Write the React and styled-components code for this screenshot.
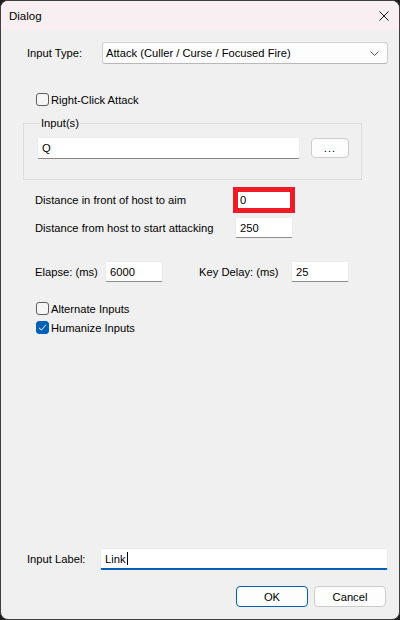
import React from "react";
import styled, { createGlobalStyle } from "styled-components";

const GlobalStyle = createGlobalStyle`
  html, body {
    margin: 0;
    padding: 0;
    background: #1f1f1f;
  }
  * {
    box-sizing: border-box;
  }
`;

const Window = styled.div`
  width: 400px;
  height: 620px;
  border: 1px solid #3f3f3f;
  border-radius: 8px;
  overflow: hidden;
  background: #f0f0f0;
  display: flex;
  flex-direction: column;
  font-family: "Liberation Sans", Arial, sans-serif;
  font-size: 11.2px;
  color: #000;
`;

const TitleBar = styled.div`
  height: 30px;
  flex: none;
  display: flex;
  align-items: center;
  justify-content: space-between;
  background: #f8eff2;
  padding: 0 10px 0 8px;
`;

const Title = styled.span`
  font-size: 11.5px;
`;

const CloseButton = styled.span`
  display: flex;
  width: 10px;
  height: 10px;
`;

const Body = styled.div`
  flex: 1;
  display: flex;
  flex-direction: column;
  padding: 0 11px 12px 26px;
`;

const Row = styled.div`
  display: flex;
  align-items: center;
  margin-top: ${(p) => p.$top || 0}px;
  padding-left: ${(p) => p.$indent || 0}px;
`;

const Label = styled.span`
  width: ${(p) => p.$width}px;
  margin-left: ${(p) => p.$gap || 0}px;
  flex: none;
  white-space: nowrap;
`;

const Combo = styled.div`
  flex: 1;
  height: 22px;
  display: flex;
  align-items: center;
  justify-content: space-between;
  background: #fdfdfd;
  border: 1px solid #cfcfcf;
  border-bottom-color: #b8b8b8;
  border-radius: 3px;
  padding: 0 8px 0 3px;
`;

const CheckRow = styled.label`
  display: flex;
  align-items: center;
  height: 19px;
  margin-top: ${(p) => p.$top || 0}px;
  padding-left: 9px;
`;

const CheckBox = styled.span`
  width: 13px;
  height: 13px;
  flex: none;
  display: flex;
  align-items: center;
  justify-content: center;
  border-radius: 3px;
  border: 1px solid ${(p) => (p.$checked ? "#005fb8" : "#5d5d5d")};
  background: ${(p) => (p.$checked ? "#005fb8" : "#f5f5f5")};
  margin-right: 2px;
`;

const Group = styled.fieldset`
  width: 339px;
  margin: ${(p) => p.$top}px 0 0 -4px;
  padding: 7px 12px 20px 13px;
  border: 1px solid #dcdcdc;
  border-radius: 0;
  min-inline-size: 0;
`;

const Legend = styled.legend`
  padding: 0 1px;
  margin-left: 3px;
  line-height: 13px;
`;

const Edit = styled.div`
  width: ${(p) => (p.$width ? `${p.$width}px` : "auto")};
  flex: ${(p) => (p.$width ? "none" : 1)};
  height: ${(p) => p.$height || 21}px;
  display: flex;
  align-items: center;
  background: #fff;
  border: 1px solid #ececec;
  border-bottom: ${(p) => (p.$focused ? "2px solid #005fb8" : "1px solid #8a8a8a")};
  border-radius: 2px;
  padding: 0 4px;
  ${(p) =>
    p.$highlight &&
    `
    border: 3px solid #ed1c24;
    border-radius: 0;
    outline: 2px solid #ed1c24;
    padding: 0 2px;
  `}
`;

const Caret = styled.span`
  display: inline-block;
  width: 1px;
  height: 13px;
  background: #000;
  margin-left: 1px;
`;

const DotsButton = styled.div`
  width: 38px;
  height: 20px;
  flex: none;
  margin-left: 11px;
  display: flex;
  align-items: center;
  justify-content: center;
  background: #fdfdfd;
  border: 1px solid #cccccc;
  border-radius: 4px;
  letter-spacing: 1px;
`;

const Footer = styled.div`
  margin-top: auto;
  display: flex;
  flex-direction: column;
`;

const ButtonBar = styled.div`
  display: flex;
  justify-content: flex-end;
  gap: 6px;
  margin-top: 16px;
  padding-right: 2px;
`;

const Button = styled.div`
  width: 72px;
  height: 21px;
  display: flex;
  align-items: center;
  justify-content: center;
  background: #fdfdfd;
  border: 1px solid ${(p) => (p.$default ? "#005fb8" : "#cccccc")};
  border-radius: 4px;
`;

const Check = () => (
  <svg width="9" height="9" viewBox="0 0 9 9">
    <path d="M1 4.8 L3.4 7 L8 1.8" fill="none" stroke="#fff" strokeWidth="1" />
  </svg>
);

export default function App() {
  return (
    <>
      <GlobalStyle />
      <Window>
        <TitleBar>
          <Title>Dialog</Title>
          <CloseButton>
            <svg width="10" height="10" viewBox="0 0 10 10">
              <path d="M0.5 0.5 L9.5 9.5 M9.5 0.5 L0.5 9.5" stroke="#1a1a1a" strokeWidth="1" />
            </svg>
          </CloseButton>
        </TitleBar>
        <Body>
          <Row $top={11}>
            <Label $width={75}>Input Type:</Label>
            <Combo>
              <span>Attack (Culler / Curse / Focused Fire)</span>
              <svg width="9" height="5" viewBox="0 0 9 5">
                <path d="M0.5 0.5 L4.5 4.5 L8.5 0.5" fill="none" stroke="#555" strokeWidth="1" />
              </svg>
            </Combo>
          </Row>

          <CheckRow $top={26}>
            <CheckBox />
            Right-Click Attack
          </CheckRow>

          <Group $top={8}>
            <Legend>Input(s)</Legend>
            <Row>
              <Edit $height={22}>Q</Edit>
              <DotsButton>...</DotsButton>
            </Row>
          </Group>

          <Row $top={9} $indent={8}>
            <Label $width={200}>Distance in front of host to aim</Label>
            <Edit $width={58} $height={22} $highlight>0</Edit>
          </Row>
          <Row $top={6} $indent={8}>
            <Label $width={200}>Distance from host to start attacking</Label>
            <Edit $width={58}>250</Edit>
          </Row>

          <Row $top={23} $indent={8}>
            <Label $width={70}>Elapse: (ms)</Label>
            <Edit $width={58}>6000</Edit>
            <Label $width={92} $gap={36}>Key Delay: (ms)</Label>
            <Edit $width={58}>25</Edit>
          </Row>

          <CheckRow $top={17}>
            <CheckBox />
            Alternate Inputs
          </CheckRow>
          <CheckRow>
            <CheckBox $checked>
              <Check />
            </CheckBox>
            Humanize Inputs
          </CheckRow>

          <Footer>
            <Row>
              <Label $width={73}>Input Label:</Label>
              <Edit $height={22} $focused>
                Link
                <Caret />
              </Edit>
            </Row>
            <ButtonBar>
              <Button $default>OK</Button>
              <Button>Cancel</Button>
            </ButtonBar>
          </Footer>
        </Body>
      </Window>
    </>
  );
}
